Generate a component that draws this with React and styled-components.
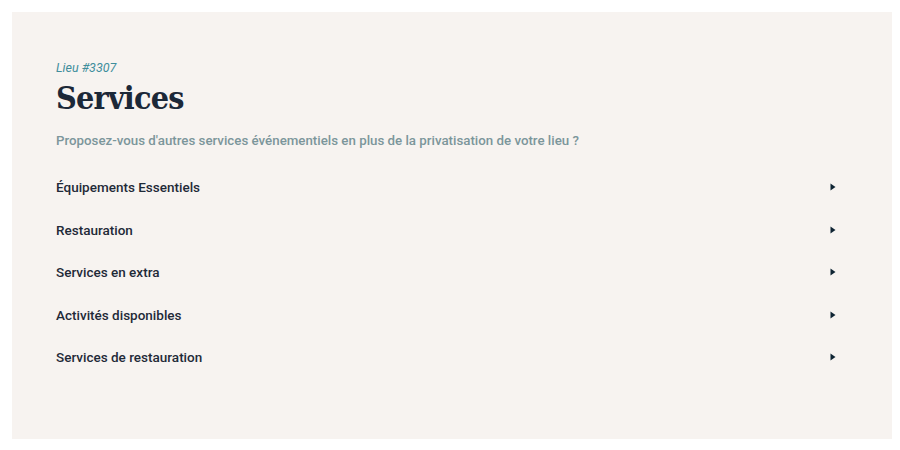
import React from "react";
import styled, { createGlobalStyle } from "styled-components";

const Global = createGlobalStyle`
  html, body { margin: 0; padding: 0; background: #ffffff; }
  body { font-family: Roboto, "Liberation Sans", sans-serif; }
`;

const Page = styled.div`
  padding: 12px 8px 10px 12px;
`;

const Panel = styled.section`
  background: #f7f3f0;
  min-height: 427px;
  box-sizing: border-box;
  padding: 48px 56px 40px 44px;
  display: flex;
  flex-direction: column;
`;

const Eyebrow = styled.div`
  font-style: italic;
  font-size: 12.5px;
  color: #3f8e9c;
  line-height: 16px;
`;

const Title = styled.h1`
  margin: 2px 0 0;
  font-family: "DejaVu Serif Condensed", "DejaVu Serif", "Liberation Serif", serif;
  font-stretch: condensed;
  font-weight: 700;
  font-size: 32px;
  line-height: 40px;
  letter-spacing: -0.8px;
  color: #1c2838;
`;

const Subtitle = styled.p`
  margin: 13px 0 0;
  font-size: 13.3px;
  font-weight: 500;
  color: #7c969b;
  line-height: 20px;
`;

const List = styled.div`
  margin-top: 15px;
  display: flex;
  flex-direction: column;
`;

const Row = styled.div`
  height: 42.5px;
  display: flex;
  align-items: center;
  justify-content: space-between;
  font-size: 13.5px;
  font-weight: 500;
  color: #1f2a38;
`;

const Caret = styled.svg`
  width: 6px;
  height: 8px;
  fill: #0f2433;
`;

const items = [
  "Équipements Essentiels",
  "Restauration",
  "Services en extra",
  "Activités disponibles",
  "Services de restauration",
];

export default function App() {
  return (
    <>
      <Global />
      <Page>
        <Panel>
          <Eyebrow>Lieu #3307</Eyebrow>
          <Title>Services</Title>
          <Subtitle>
            Proposez-vous d'autres services événementiels en plus de la privatisation de votre lieu ?
          </Subtitle>
          <List>
            {items.map((t) => (
              <Row key={t}>
                <span>{t}</span>
                <Caret viewBox="0 0 6 8">
                  <path d="M0.5 0.5 L5.5 4 L0.5 7.5 Z" />
                </Caret>
              </Row>
            ))}
          </List>
        </Panel>
      </Page>
    </>
  );
}
